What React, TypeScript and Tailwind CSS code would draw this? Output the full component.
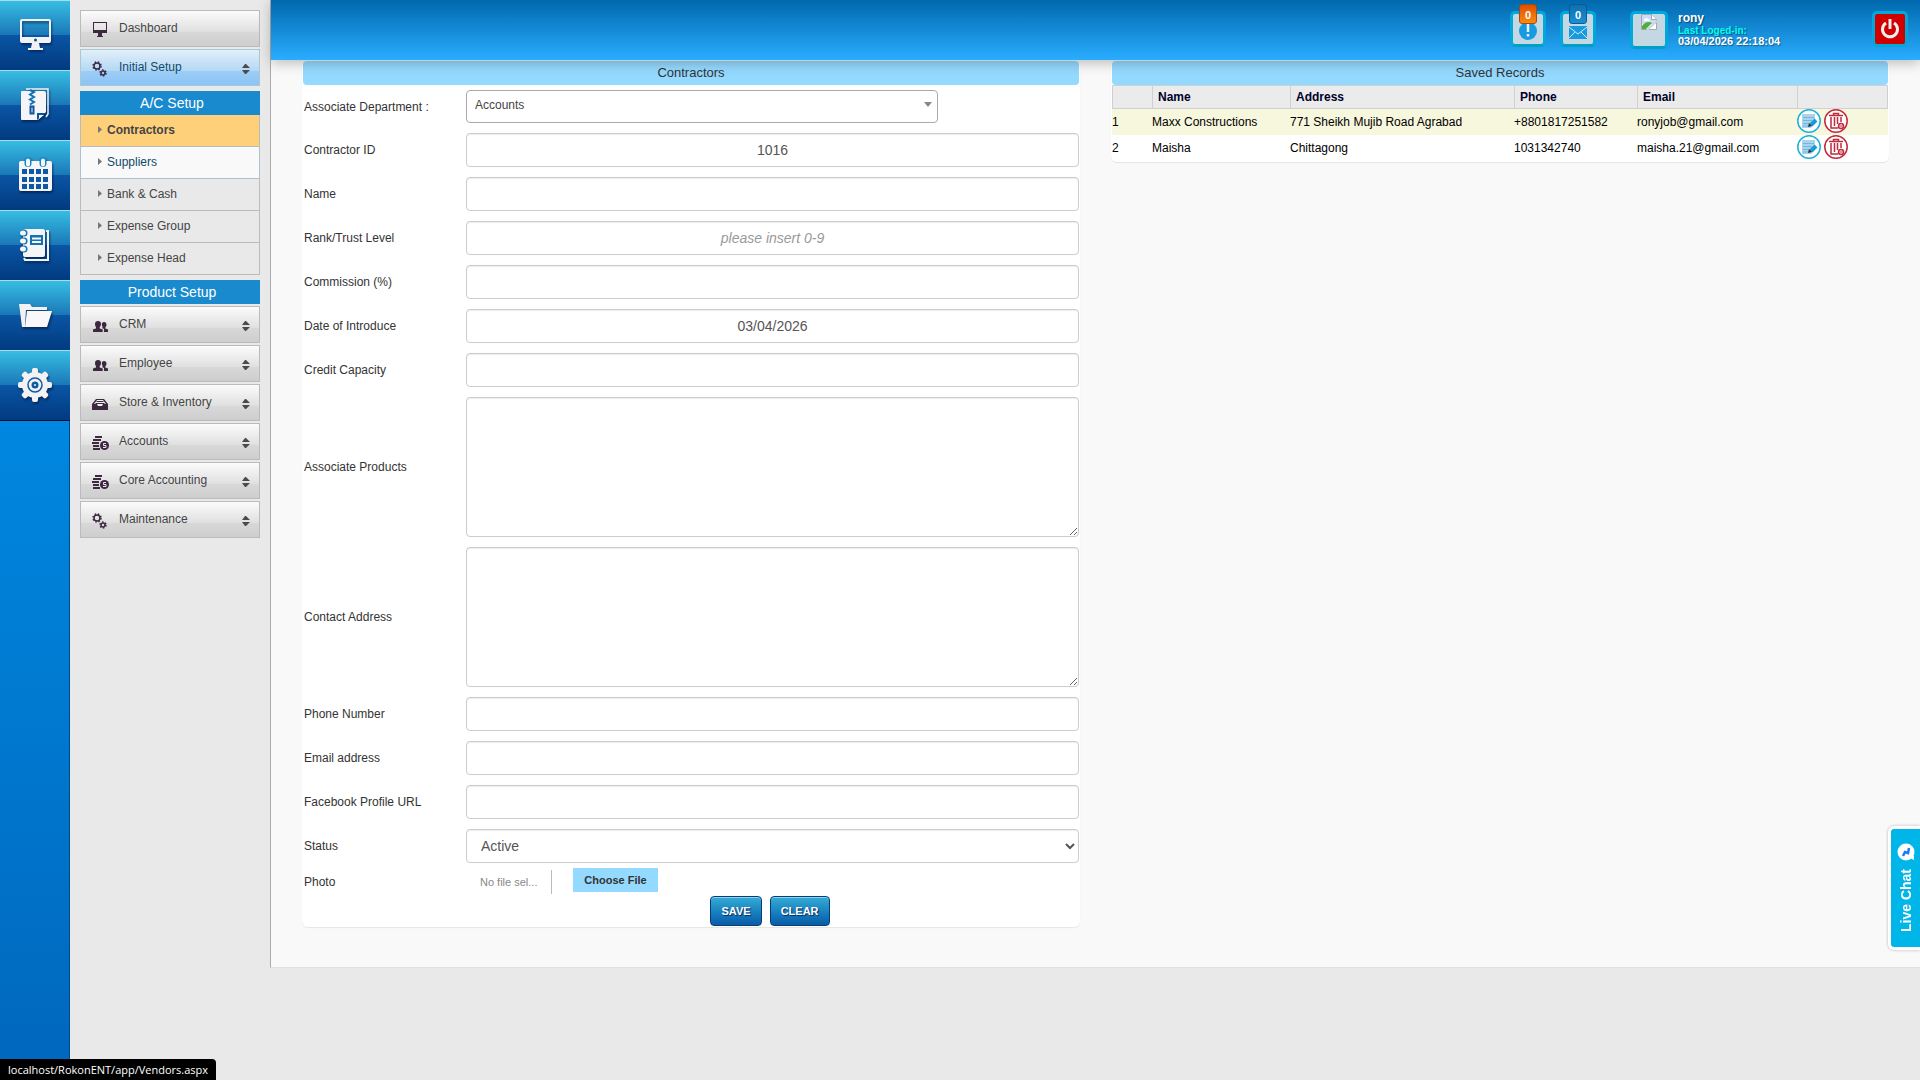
import { useState } from 'react';
import type { ReactNode } from 'react';

type MenuItem = { label: string; icon: ReactNode };

/* ---------- Rail icons ---------- */

const railIcon = 'h-9 w-9 drop-shadow-[1px_2px_1px_rgba(0,20,60,0.6)]';

function MonitorIcon() {
  return (
    <svg viewBox="0 0 36 36" className={railIcon}>
      <path fill="#f2f2f4" fillRule="evenodd" d="M5 2h27a2 2 0 0 1 2 2v20a2 2 0 0 1-2 2H22l1 5h3v2H11v-2h3l1-5H5a2 2 0 0 1-2-2V4a2 2 0 0 1 2-2zm0 2v16h27V4z" />
      <circle cx="18.500" cy="23" r="1.500" fill="#0b529f" />
    </svg>
  );
}

function ZipIcon() {
  return (
    <svg viewBox="0 0 36 36" className={railIcon}>
      <path fill="none" stroke="#f2f2f4" strokeWidth="1.500" d="M9 2h22v25l-2 3" />
      <path fill="#f5f5f7" d="M5 4h22a2 2 0 0 1 2 2v19l-8 8H5a1 1 0 0 1-1-1V5a1 1 0 0 1 1-1z" />
      <path fill="#0b529f" d="M20 33v-7h9z" />
      <path fill="#f5f5f7" d="M22 28h5l-5 4z" />
      <path fill="none" stroke="#1270b4" strokeWidth="2" d="M13 3l4 2-4 2.500 4 2.500-4 2.500 4 2.500-4 2.500" />
      <path fill="none" stroke="#0b529f" strokeWidth="2" d="M13.500 19.500h3v7h-3z" />
    </svg>
  );
}

function CalendarIcon() {
  const cells = [0, 1, 2, 3];
  return (
    <svg viewBox="0 0 36 36" className={railIcon}>
      <rect x="2" y="4" width="33" height="30" rx="2" fill="#f5f5f7" />
      <path stroke="#1b86c1" strokeWidth="7" strokeLinecap="round" d="M11 3.500v3M26 3.500v3" />
      <path stroke="#f5f5f7" strokeWidth="4" strokeLinecap="round" d="M11 3.500v4M26 3.500v4" />
      {[11, 19, 26].map((y) => cells.map((c) => (
        <rect key={`${y}-${c}`} x={5 + c * 7} y={y + 1} width="5" height="5" fill="#0c58a2" />
      )))}
    </svg>
  );
}

function NotebookIcon() {
  return (
    <svg viewBox="0 0 36 36" className={railIcon}>
      <path fill="none" stroke="#f2f2f4" strokeWidth="2" d="M29 4h2v29H8l-1-2" />
      <rect x="6" y="2" width="22" height="28" rx="2" fill="#f5f5f7" />
      <path fill="#1173b5" d="M13 8h13v10H13z" />
      <path stroke="#f5f5f7" strokeWidth="2" d="M15 11.500h9M15 15h9" />
      {[6, 14, 22].map((y) => (
        <g key={y}>
          <circle cx="7" cy={y} r="3.500" fill="#1271b5" />
          <ellipse cx="6" cy={y} rx="3" ry="2.500" fill="#f5f5f7" />
        </g>
      ))}
    </svg>
  );
}

function FolderIcon() {
  return (
    <svg viewBox="0 0 36 36" className={railIcon}>
      <path fill="#f2f2f4" d="M2 7h11l2 3h15v3H9l-1 17H5z" />
      <path fill="#f8f8fa" d="M10 14h25l-5 16H8z" />
    </svg>
  );
}

function GearIcon() {
  return (
    <svg viewBox="0 0 36 36" className={railIcon}>
      <g fill="#f2f2f4">
        <circle cx="18" cy="18" r="13" />
        {[0, 45, 90, 135, 180, 225, 270, 315].map((a) => (
          <rect key={a} x="15" y="1" width="6" height="8" rx="2" transform={`rotate(${a} 18 18)`} />
        ))}
      </g>
      <circle cx="18" cy="18" r="7" fill="none" stroke="#0d5ba5" strokeWidth="1.500" />
      <circle cx="18" cy="18" r="3.500" fill="#0d5ba5" />
      <circle cx="18" cy="18" r="1" fill="#f2f2f4" />
    </svg>
  );
}

const railItems: MenuItem[] = [
  { label: 'Desktop', icon: <MonitorIcon /> },
  { label: 'Archive', icon: <ZipIcon /> },
  { label: 'Calendar', icon: <CalendarIcon /> },
  { label: 'Notebook', icon: <NotebookIcon /> },
  { label: 'Files', icon: <FolderIcon /> },
  { label: 'Settings', icon: <GearIcon /> },
];

/* ---------- Sidebar icons ---------- */

function SmallMonitor() {
  return (
    <svg viewBox="0 0 16 16" className="h-4 w-4">
      <path fill="#3d2840" fillRule="evenodd" d="M1 0h14v11h-5v3h1v1H5v-1h1v-3H1zm1 1v7h12V1z" />
    </svg>
  );
}

function SmallGear({ x, y, r }: { x: number; y: number; r: number }) {
  return (
    <g fill="none" stroke="#3d2840">
      <circle cx={x} cy={y} r={r} strokeWidth="1.500" />
      <circle cx={x} cy={y} r={r + 1} strokeWidth="1.500" strokeDasharray="1.500 1.700" />
    </g>
  );
}

function SmallGears() {
  return (
    <svg viewBox="0 0 16 16" className="h-4 w-4">
      <SmallGear x={5} y={5} r={3} />
      <SmallGear x={11} y={12} r={2} />
    </svg>
  );
}

function SmallUsers() {
  return (
    <svg viewBox="0 0 16 16" className="h-4 w-4">
      <path fill="#3d2840" d="M6 3c2 0 3 1 3 3 0 1.500-.7 2.500-1.300 3.200v1.300l3 1V14H1v-2.500l3-1V9.200C3.500 8.500 3 7.500 3 6c0-2 1-3 3-3z" />
      <path fill="#3d2840" d="M12 4c1.700 0 2.500 1 2.500 2.500 0 1.300-.5 2.200-1.200 2.900v1.200l2.700 1V14h-4v-3l-2-1 .7-.8C10 8 9.800 7 9.800 6 9.800 5 10.500 4 12 4z" />
    </svg>
  );
}

function SmallInbox() {
  return (
    <svg viewBox="0 0 16 16" className="h-4 w-4">
      <path fill="#3d2840" d="M4 3h8l4 5v6H0V8z" />
      <path fill="#f1f1f1" d="M5 4h6l3 4h-3l-1 2H6L5 8H2z" />
      <path stroke="#3d2840" d="M4.500 5.500h7M3.500 7.500h9" />
    </svg>
  );
}

function SmallCoins() {
  return (
    <svg viewBox="0 0 18 16" className="h-4 w-[18px]">
      <path stroke="#3d2840" strokeWidth="2" d="M3 2h7M1 5h8M0 8h7M1 11h6M1 14h7" />
      <circle cx="12.500" cy="10.500" r="4.500" fill="#3d2840" />
      <path fill="none" stroke="#e8e8e8" d="M14 8.500h-2.500v2h2.500v2h-3" />
    </svg>
  );
}

const modules: MenuItem[] = [
  { label: 'CRM', icon: <SmallUsers /> },
  { label: 'Employee', icon: <SmallUsers /> },
  { label: 'Store & Inventory', icon: <SmallInbox /> },
  { label: 'Accounts', icon: <SmallCoins /> },
  { label: 'Core Accounting', icon: <SmallCoins /> },
  { label: 'Maintenance', icon: <SmallGears /> },
];

const setupLinks = ['Contractors', 'Suppliers', 'Bank & Cash', 'Expense Group', 'Expense Head'];

const linkStyles: Record<string, string> = {
  Contractors: 'bg-[#ffd07a] border-[#bbbbbb] font-bold text-[#444444]',
  Suppliers: 'bg-[#f9f9f9] border-[#a9c4cf] text-[#0f4a6b]',
};

function MenuButton({ item, active = false, expandable = true }: { item: MenuItem; active?: boolean; expandable?: boolean }) {
  const tone = active
    ? 'border-[#a9c8d6] bg-[linear-gradient(#e2eff9,#b5d8f5_59%,#9dcdf6_60%,#8bc4f7)] text-[#0f4a6b]'
    : 'border-[#bbbbbb] bg-[linear-gradient(#fbfbfb,#e0e0e0_59%,#d8d8d8_60%,#cecece)] text-[#444444]';

  return (
    <button type="button" className={`flex h-[37px] w-full items-center border pl-[11px] pr-2 text-left text-xs ${tone}`}>
      <span className="w-[27px] pt-0.5">{item.icon}</span>
      <span className="flex-1 pb-0.5">{item.label}</span>
      {expandable && (
        <svg viewBox="0 0 10 12" className="mt-0.5 h-3 w-2.5">
          <path fill="#4b4b4b" d="M1 5l3-4h1l4 4zM1 7h8l-4 4H4z" />
        </svg>
      )}
    </button>
  );
}

function SectionTitle({ children }: { children: ReactNode }) {
  return <h2 className="h-6 bg-[#188acd] pl-1 text-center text-sm leading-6 text-white">{children}</h2>;
}

function Sidebar() {
  return (
    <nav className="w-[200px] shrink-0 px-2.5 pt-2.5">
      <div className="space-y-0.5">
        <MenuButton item={{ label: 'Dashboard', icon: <SmallMonitor /> }} expandable={false} />
        <MenuButton item={{ label: 'Initial Setup', icon: <SmallGears /> }} active />
      </div>

      <div className="mt-[5px]">
        <SectionTitle>A/C Setup</SectionTitle>
        <ul>
          {setupLinks.map((label) => (
            <li key={label}>
              <a
                href="#"
                className={`flex h-8 items-center border-x border-b pl-[17px] pb-0.5 text-xs ${linkStyles[label] ?? 'border-[#bbbbbb] text-[#444444]'}`}
              >
                <svg viewBox="0 0 4 7" className="mr-[5px] h-[7px] w-1">
                  <path fill="#777777" d="M0 0l4 3.500L0 7z" />
                </svg>
                {label}
              </a>
            </li>
          ))}
        </ul>
      </div>

      <div className="mt-[5px]">
        <SectionTitle>Product Setup</SectionTitle>
        <div className="mt-0.5 space-y-0.5">
          {modules.map((item) => <MenuButton key={item.label} item={item} />)}
        </div>
      </div>
    </nav>
  );
}

/* ---------- Top bar ---------- */

const headerTile = 'relative flex items-center justify-center rounded-[5px] border-[3px] border-[#00a9dc] border-b-[#009fc6] bg-[#c3d8e2]';
const badge = 'absolute -top-[10px] left-[6px] h-5 w-[18px] rounded-[3px] border text-center text-[11px] font-bold leading-5 text-white';

function TopBar() {
  return (
    <header className="relative z-10 flex h-[60px] items-start justify-end bg-[linear-gradient(#0068ad,#29adff)] pr-3 pt-[11px] shadow-[0_3px_12px_rgba(0,0,0,0.25)]">
      <button type="button" aria-label="Alerts" className={`${headerTile} h-9 w-9`}>
        <svg viewBox="0 0 18 18" className="mt-1 h-[18px] w-[18px]">
          <circle cx="9" cy="9" r="9" fill="#169be0" />
          <path stroke="#e6f2f8" strokeWidth="2.500" d="M9 2v8M9 12v2.500" />
        </svg>
        <span className={`${badge} border-[#a34a10] bg-[linear-gradient(#e04e00,#f98a10)]`}>0</span>
      </button>
      <button type="button" aria-label="Messages" className={`${headerTile} ml-3.5 h-9 w-9`}>
        <svg viewBox="0 0 18 13" className="mt-1.5 h-[13px] w-[18px]">
          <path fill="#169be0" d="M0 0h18v13H0z" />
          <path fill="none" stroke="#d5e6ef" d="M0 1l9 7 9-7M0 12l6-6M18 12l-6-6" />
        </svg>
        <span className={`${badge} border-[#075c98] bg-[linear-gradient(#0f6fb0,#1b8fd4)]`}>0</span>
      </button>

      <div className={`${headerTile} ml-[34px] h-[38px] w-[38px]`}>
        <svg viewBox="0 0 16 16" className="h-4 w-4 self-start">
          <path fill="#ffffff" stroke="#a5a5b0" d="M.5.500h10l5 5v10H.500z" />
          <path fill="#c9dbf7" d="M1 1h9v4h5v5H1z" />
          <path fill="#ffffff" d="M3 6c0-2 3-3 4-1 2 0 2 2 1 2H3z" />
          <path fill="#4fae3b" d="M1 15v-3c3-4 7-5 10-3l-6 6z" />
          <path fill="#ffffff" stroke="#a5a5b0" d="M10.500.500v5h5" />
          <path stroke="#c3d8e2" strokeWidth="2" d="M6 16l10-9" />
        </svg>
      </div>
      <div className="ml-2.5 w-[170px] pt-px text-[11px] font-bold leading-[11px] text-white [text-shadow:1px_1px_1px_rgba(0,0,0,0.4)]">
        <p className="text-xs leading-[13px]">rony</p>
        <p className="text-[10px] text-[#00fff0]">Last Loged-in:</p>
        <p>03/04/2026 22:18:04</p>
      </div>

      <button type="button" aria-label="Log out" className="ml-6 flex h-9 w-9 items-center justify-center rounded-[5px] border-[3px] border-[#00a9dc] bg-[#d00000]">
        <svg viewBox="0 0 20 20" className="h-5 w-5" fill="none" stroke="#eeeeee" strokeWidth="3">
          <path d="M6 4a7.500 7.500 0 1 0 8 0M10 0v10" />
        </svg>
      </button>
    </header>
  );
}

/* ---------- Form ---------- */

const boxStyle = 'block w-full rounded border border-[#cccccc] bg-white text-center text-sm text-[#555555] shadow-[inset_0_1px_1px_rgba(0,0,0,0.075)] placeholder:italic placeholder:text-[#999999]';

type Field = { id: string; label: string; value?: string; hint?: string; multiline?: boolean };

const fields: Field[] = [
  { id: 'contractorId', label: 'Contractor ID', value: '1016' },
  { id: 'name', label: 'Name' },
  { id: 'rank', label: 'Rank/Trust Level', hint: 'please insert 0-9' },
  { id: 'commission', label: 'Commission (%)' },
  { id: 'introduced', label: 'Date of Introduce', value: '03/04/2026' },
  { id: 'credit', label: 'Credit Capacity' },
  { id: 'products', label: 'Associate Products', multiline: true },
  { id: 'address', label: 'Contact Address', multiline: true },
  { id: 'phone', label: 'Phone Number' },
  { id: 'email', label: 'Email address' },
  { id: 'facebook', label: 'Facebook Profile URL' },
];

function PanelTitle({ children }: { children: ReactNode }) {
  return <h3 className="h-6 rounded bg-[#94d9ff] text-center text-[13px] leading-[23px] text-[#333333]">{children}</h3>;
}

function Row({ id, label, children }: { id: string; label: string; children: ReactNode }) {
  return (
    <div className="flex items-center">
      <label htmlFor={id} className="w-[162px] shrink-0 text-xs text-[#333333]">{label}</label>
      <div className="min-w-0 flex-1">{children}</div>
    </div>
  );
}

function ContractorForm() {
  const [values, setValues] = useState<Record<string, string>>(
    Object.fromEntries(fields.map((f) => [f.id, f.value ?? '']))
  );

  const update = (id: string, value: string) => setValues({ ...values, [id]: value });

  const buttonStyle = 'h-[30px] rounded border border-[#063f78] bg-[linear-gradient(#33acd6,#1273b8_70%,#0a5ca5)] px-2.5 text-[11px] font-bold text-white shadow-[inset_0_1px_0_#8fd0ee] [text-shadow:1px_1px_1px_#042c5c]';

  return (
    <form className="rounded-md bg-white pb-px shadow-[0_1px_1px_rgba(0,0,0,0.08)]" onSubmit={(e) => e.preventDefault()}>
      <div className="px-px">
        <PanelTitle>Contractors</PanelTitle>
      </div>

      <div className="space-y-2.5 pl-0.5 pr-px pt-[5px]">
        <Row id="department" label="Associate Department :">
          <div className="relative w-[77%]">
            <select id="department" className="block h-[33px] w-full appearance-none rounded border border-[#aaaaaa] bg-white px-2 pb-1 text-xs text-[#444444]">
              <option>Accounts</option>
            </select>
            <svg viewBox="0 0 8 5" className="pointer-events-none absolute right-1.5 top-3 h-[5px] w-2">
              <path fill="#888888" d="M0 0h8L4 5z" />
            </svg>
          </div>
        </Row>

        {fields.map((f) => (
          <Row key={f.id} id={f.id} label={f.label}>
            {f.multiline ? (
              <textarea id={f.id} className={`${boxStyle} h-[140px] resize-y`} value={values[f.id]} onChange={(e) => update(f.id, e.target.value)} />
            ) : (
              <input id={f.id} type="text" className={`${boxStyle} h-[34px] px-3`} placeholder={f.hint} value={values[f.id]} onChange={(e) => update(f.id, e.target.value)} />
            )}
          </Row>
        ))}

        <Row id="status" label="Status">
          <select id="status" className="block h-[34px] w-full rounded border border-[#cccccc] bg-white px-2.5 text-sm text-[#555555] shadow-[inset_0_1px_1px_rgba(0,0,0,0.075)]">
            <option>Active</option>
            <option>Inactive</option>
          </select>
        </Row>
      </div>

      <div className="flex h-[33px] px-0.5 pt-[5px]">
        <label htmlFor="photo" className="w-[162px] pt-1.5 text-xs text-[#333333]">Photo</label>
        <span className="mt-0.5 h-6 w-[86px] border-r border-[#bbbbbb] pl-[14px] text-[11px] leading-6 text-[#888888]">No file sel...</span>
        <label htmlFor="photo" className="ml-[21px] h-6 w-[85px] cursor-pointer bg-[#94d9ff] text-center text-[11px] font-bold leading-6 text-[#333333]">Choose File</label>
        <input id="photo" type="file" className="sr-only" />
      </div>

      <div className="flex justify-center gap-2 pl-[158px]">
        <button type="submit" className={buttonStyle}>SAVE</button>
        <button type="reset" className={buttonStyle}>CLEAR</button>
      </div>
    </form>
  );
}

/* ---------- Saved records ---------- */

const records = [
  { id: 1, name: 'Maxx Constructions', address: '771 Sheikh Mujib Road Agrabad', phone: '+8801817251582', email: 'ronyjob@gmail.com' },
  { id: 2, name: 'Maisha', address: 'Chittagong', phone: '1031342740', email: 'maisha.21@gmail.com' },
];

function EditIcon() {
  return (
    <svg viewBox="0 0 24 24" className="h-6 w-6">
      <circle cx="12" cy="12" r="11.200" fill="#ffffff" stroke="#1bb0dc" strokeWidth="1.500" />
      <path fill="#a9d4ee" d="M5 5h13v9l-4 5H5z" />
      <path stroke="#74b6dd" d="M6 8.500h11M6 11.500h9M6 14.500h6M6 17h5" />
      <path stroke="#149bd8" strokeWidth="4" d="M19 11l-5 5" />
      <path fill="#1d3246" d="M12 14l3 3-4 1z" />
    </svg>
  );
}

function DeleteIcon() {
  return (
    <svg viewBox="0 0 24 24" className="h-6 w-6" fill="none" stroke="#bf2a3d">
      <circle cx="12" cy="12" r="11.200" fill="#ffffff" strokeWidth="1.500" />
      <path strokeWidth="1.500" d="M5 6.500h14M9.500 6V4.500h5V6M7 8v11h7M10.500 8v9M13.500 8v7M17 8v5" />
      <circle cx="17" cy="17" r="2.500" fill="#ffffff" strokeWidth="1.500" />
      <path d="M15.500 17h3" />
    </svg>
  );
}

function SavedRecords() {
  return (
    <section className="rounded-md bg-white pb-px shadow-[0_1px_1px_rgba(0,0,0,0.08)]">
      <div className="px-px">
        <PanelTitle>Saved Records</PanelTitle>
        <table className="w-full table-fixed border-separate border-spacing-0 text-left text-xs text-black">
          <colgroup>
            <col className="w-10" />
            <col className="w-[138px]" />
            <col />
            <col className="w-[123px]" />
            <col className="w-[160px]" />
            <col className="w-[91px]" />
          </colgroup>
          <thead>
            <tr className="h-6 bg-[#ebebeb] text-[#00002a]">
              {['', 'Name', 'Address', 'Phone', 'Email', ''].map((title, i) => (
                <th key={i} className="border-y border-l border-[#d0d0d0] px-[5px] py-0 last:border-r">{title}</th>
              ))}
            </tr>
          </thead>
          <tbody>
            {records.map((r) => (
              <tr key={r.id} className="h-[26px] odd:bg-[#f7f7de]">
                <td className="p-0">{r.id}</td>
                <td className="p-0">{r.name}</td>
                <td className="p-0">{r.address}</td>
                <td className="p-0">{r.phone}</td>
                <td className="p-0">{r.email}</td>
                <td className="p-0 align-top">
                  <div className="flex gap-[3px]">
                    <button type="button" aria-label={`Edit ${r.name}`}><EditIcon /></button>
                    <button type="button" aria-label={`Delete ${r.name}`}><DeleteIcon /></button>
                  </div>
                </td>
              </tr>
            ))}
          </tbody>
        </table>
      </div>
    </section>
  );
}

/* ---------- Page ---------- */

export default function App() {
  return (
    <div className="flex min-h-screen bg-[#e9e9e9] font-['Liberation_Sans',Arial,sans-serif]">
      <aside className="w-[70px] shrink-0 border-r border-[#004a86] bg-[linear-gradient(#009cf5,#0067bd)]">
        <div className="-mr-px border-b border-[#04122c]">
          {railItems.map((item) => (
            <button
              key={item.label}
              type="button"
              aria-label={item.label}
              className="flex h-[70px] w-full items-center justify-center border-t border-[#a9dcf0] bg-[linear-gradient(#37bde2,#1a78b8_49%,#0a55a4_50%,#023a80)] pb-0.5"
            >
              {item.icon}
            </button>
          ))}
        </div>
      </aside>

      <Sidebar />

      <div className="min-w-0 flex-1">
        <div className="border-b border-l border-b-[#e0e0e0] border-l-[#aaaaaa] bg-[#f9f9f9] pb-10">
          <TopBar />
          <main className="grid grid-cols-2 items-start gap-[31px] px-[31px] pt-px">
            <ContractorForm />
            <SavedRecords />
          </main>
        </div>
      </div>

      <button type="button" className="fixed right-0 top-[826px] z-20 flex h-[124px] w-[32px] flex-col items-center gap-2 rounded-l-md border-[3px] border-r-0 border-white bg-[#00b5e8] pt-3.5 text-sm font-bold text-white shadow-[0_0_3px_rgba(0,0,0,0.3)]">
        <svg viewBox="0 0 18 18" className="h-[18px] w-[18px] shrink-0">
          <circle cx="9" cy="9" r="8.500" fill="#ffffff" />
          <path fill="#ffffff" d="M11 14l6-1v4z" />
          <path fill="none" stroke="#1a7cf0" strokeWidth="2.500" d="M6 13l2-4 3 1 1-5" />
        </svg>
        <span className="rotate-180 whitespace-nowrap [writing-mode:vertical-rl]">Live Chat</span>
      </button>

      <div className="fixed bottom-0 left-0 z-20 h-[21px] rounded-tr bg-black px-2 font-['Open_Sans',sans-serif] text-[11px] leading-[21px] text-white">
        localhost/RokonENT/app/Vendors.aspx
      </div>
    </div>
  );
}
